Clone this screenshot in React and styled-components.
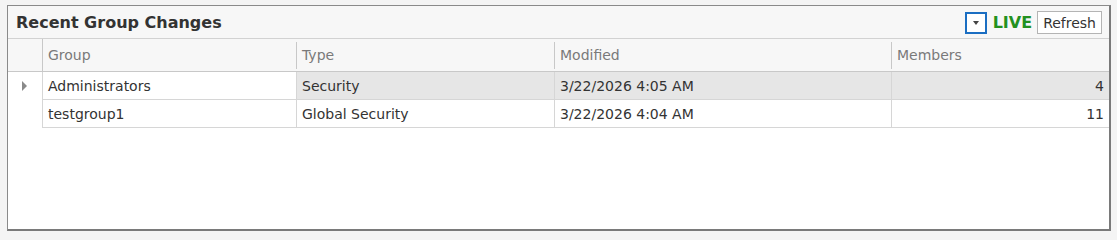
import React from "react";
import styled, { createGlobalStyle } from "styled-components";

const GlobalStyle = createGlobalStyle`
  html, body {
    margin: 0;
    padding: 0;
    background: #f4f4f4;
    font-family: "DejaVu Sans", "Liberation Sans", sans-serif;
  }
`;

const Page = styled.div`
  padding: 5px 0 0 7px;
`;

const Panel = styled.section`
  box-sizing: border-box;
  width: 1104px;
  height: 226px;
  background: #ffffff;
  border: 1px solid #8a8a8a;
  border-right: 2px solid #7a7a7a;
  border-bottom: 2px solid #7a7a7a;
  display: flex;
  flex-direction: column;
`;

const TitleBar = styled.header`
  height: 32px;
  background: #f7f7f7;
  display: flex;
  align-items: center;
  justify-content: space-between;
  padding: 0 7px 0 8px;
`;

const Title = styled.h2`
  margin: 0;
  font-size: 16px;
  font-weight: bold;
  color: #333333;
`;

const Tools = styled.div`
  display: flex;
  align-items: center;
  margin-top: 1px;
`;

const DropButton = styled.button`
  box-sizing: border-box;
  width: 22px;
  height: 22px;
  margin-right: 6px;
  border: 2px solid #1b6ec2;
  background: #ffffff;
  padding: 0;
  display: flex;
  align-items: center;
  justify-content: center;
  &::after {
    content: "";
    border-left: 3px solid transparent;
    border-right: 3px solid transparent;
    border-top: 4px solid #444;
  }
`;

const Live = styled.span`
  font-size: 16px;
  font-weight: bold;
  color: #23911f;
  margin-right: 5px;
`;

const RefreshButton = styled.button`
  box-sizing: border-box;
  height: 23px;
  padding: 0 5px;
  border: 1px solid #b4b4b4;
  background: #ffffff;
  font-family: inherit;
  font-size: 14px;
  color: #333333;
`;

const Grid = styled.div`
  display: grid;
  grid-template-columns: 34px 254px 258px 337px 1fr;
  border-top: 1px solid #d2d2d2;
`;

const HeadCell = styled.div`
  height: 32px;
  background: #f7f7f7;
  border-bottom: 1px solid #c8c8c8;
  display: flex;
  align-items: center;
  padding-left: 6px;
  font-size: 14px;
  color: #7a7a7a;
  position: relative;
  &::before {
    content: "";
    display: ${(p) => (p.$first ? "none" : "block")};
    position: absolute;
    left: 0;
    top: ${(p) => (p.$tall ? "0" : "3px")};
    bottom: ${(p) => (p.$tall ? "0" : "2px")};
    border-left: 1px solid #c8c8c8;
  }
`;

const Cell = styled.div`
  box-sizing: border-box;
  height: 28px;
  display: flex;
  align-items: center;
  justify-content: ${(p) => (p.$right ? "flex-end" : "flex-start")};
  padding: 0 5px 0 5px;
  font-size: 14px;
  color: #333333;
  background: ${(p) => (p.$selected ? "#e6e6e6" : "#ffffff")};
  border-bottom: ${(p) => (p.$indicator ? "none" : "1px solid #d6d6d6")};
  border-left: ${(p) => (p.$indicator ? "none" : "1px solid #d6d6d6")};
`;

const Indicator = styled.span`
  margin-left: 9px;
  border-top: 5px solid transparent;
  border-bottom: 5px solid transparent;
  border-left: 5px solid #8a8a8a;
`;

const rows = [
  { group: "Administrators", type: "Security", modified: "3/22/2026 4:05 AM", members: 4, current: true },
  { group: "testgroup1", type: "Global Security", modified: "3/22/2026 4:04 AM", members: 11 },
];

export default function App() {
  return (
    <Page>
      <GlobalStyle />
      <Panel>
        <TitleBar>
          <Title>Recent Group Changes</Title>
          <Tools>
            <DropButton aria-label="options" />
            <Live>LIVE</Live>
            <RefreshButton>Refresh</RefreshButton>
          </Tools>
        </TitleBar>
        <Grid>
          <HeadCell $first />
          <HeadCell $tall>Group</HeadCell>
          <HeadCell>Type</HeadCell>
          <HeadCell>Modified</HeadCell>
          <HeadCell>Members</HeadCell>
          {rows.map((r) => (
            <React.Fragment key={r.group}>
              <Cell $indicator>{r.current && <Indicator />}</Cell>
              <Cell>{r.group}</Cell>
              <Cell $selected={r.current}>{r.type}</Cell>
              <Cell $selected={r.current}>{r.modified}</Cell>
              <Cell $selected={r.current} $right>
                {r.members}
              </Cell>
            </React.Fragment>
          ))}
        </Grid>
      </Panel>
    </Page>
  );
}
